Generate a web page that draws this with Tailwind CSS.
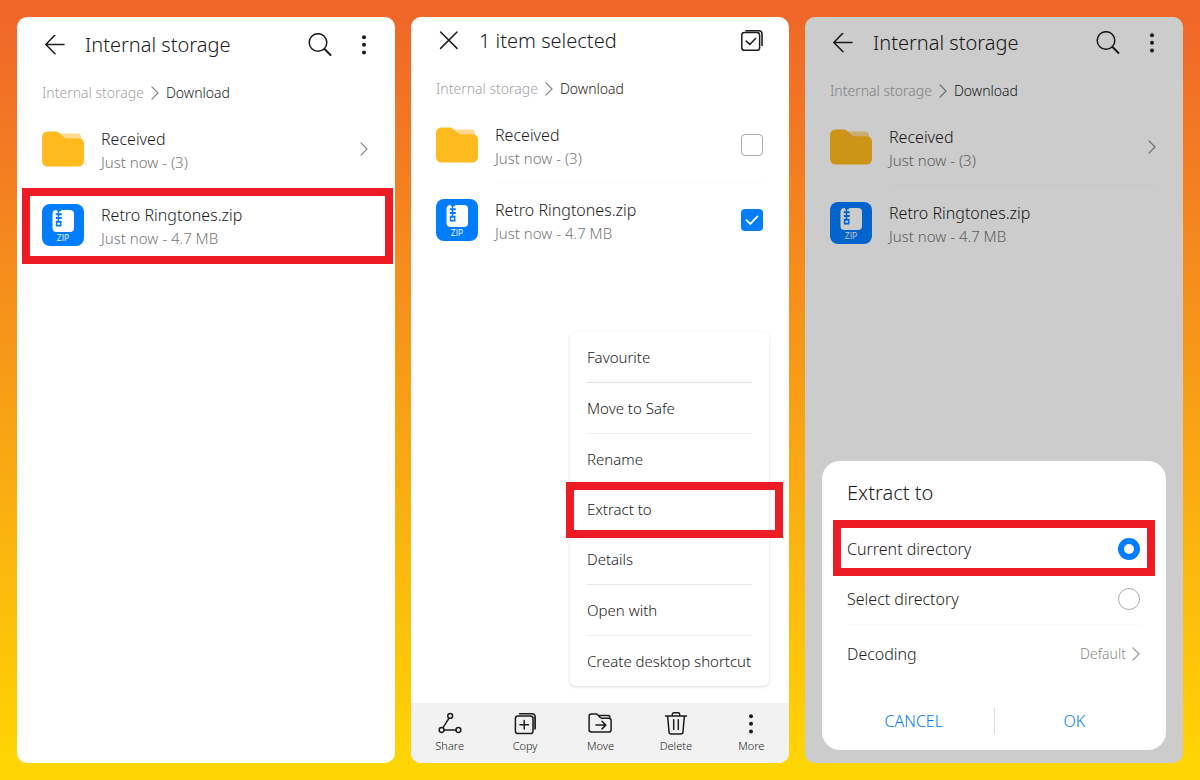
<!DOCTYPE html>
<html lang="en">
<head>
<meta charset="utf-8">
<meta name="viewport" content="width=device-width, initial-scale=1">
<title>Extract a zip file</title>
<script src="https://cdn.jsdelivr.net/npm/@tailwindcss/browser@4"></script>
</head>
<body class="grid min-h-screen grid-cols-3 gap-4 bg-linear-to-b/srgb from-[#f06729] from-2% to-[#ffd503] to-98% p-[17px] font-['Noto_Sans','Open_Sans',sans-serif] font-light text-[#1c1c1c]">

<!-- Shared icons -->
<svg class="hidden" aria-hidden="true">
  <symbol id="back" viewBox="0 0 20 20"><path d="M10 0 .8 9.400l9.200 9.400M.8 9.400h18.200" fill="none" stroke="currentColor" stroke-width="1.500" stroke-linecap="round" stroke-linejoin="round"/></symbol>
  <symbol id="close" viewBox="0 0 20 20"><path d="m1.600 1 16.400 16.400M18 1 1.600 17.400" fill="none" stroke="currentColor" stroke-width="1.500" stroke-linecap="round"/></symbol>
  <symbol id="search" viewBox="0 0 24 24"><g fill="none" stroke="currentColor"><circle cx="10" cy="9.500" r="8.800" stroke-width="1.500"/><path d="m16.500 16 6 6" stroke-width="1.900" stroke-linecap="round"/></g></symbol>
  <symbol id="dots" viewBox="0 0 6 20"><g fill="currentColor"><circle cx="3" cy="2.200" r="2"/><circle cx="3" cy="9.800" r="2"/><circle cx="3" cy="17.400" r="2"/></g></symbol>
  <symbol id="chevron" viewBox="0 0 8 14"><path d="m1 .8 6 6.200-6 6.200" fill="none" stroke="currentColor" stroke-width="1.200" stroke-linecap="round" stroke-linejoin="round"/></symbol>
  <symbol id="select-all" viewBox="0 0 22 22"><g fill="none" stroke="currentColor" stroke-width="1.500" stroke-linecap="round" stroke-linejoin="round"><rect x=".8" y="2.500" width="17.800" height="17.800" rx="2.600"/><path d="m5.300 11.100 3.500 3.400 5.900-6.200"/><path d="M5 .8h13a3 3 0 0 1 3 3V15.500" stroke-width="1.600"/></g></symbol>
  <symbol id="folder" viewBox="0 0 42 36"><path d="M14 2.500h21.500a3.500 3.500 0 0 1 3.500 3.500v8H18z" fill="#ffd98f"/><path d="M5.500.5h8.300a5 5 0 0 1 3.400 1.400l4.700 4.400a4 4 0 0 0 2.600 1H37a5 5 0 0 1 5 5V30a5.500 5.500 0 0 1-5.500 5.500h-31A5.500 5.500 0 0 1 0 30V6A5.500 5.500 0 0 1 5.500.5z" fill="#ffbb1e"/></symbol>
  <symbol id="zip" viewBox="0 0 42 42"><rect width="42" height="42" rx="8" fill="#007dff"/><rect x="10.500" y="6" width="21.500" height="22" rx="4" fill="#fff"/><path d="M15.500 5.500h3.700v1.800h-2v1.900h2.600v2h-2.600v1.800h2.600v2h-2.600v1.800h2.300v5.700h-5.700v-5.700h2v-1.800h-2v-2h2v-1.800h-2v-2h2V7.300h-1.300z" fill="#007dff"/><path d="M15.300 18.800h2.800v2h-2.800z" fill="#fff"/><text x="21" y="37.300" text-anchor="middle" font-family="Open Sans, sans-serif" font-size="8.500" font-weight="400" fill="#fff">ZIP</text></symbol>
  <symbol id="share" viewBox="0 0 24 24"><g fill="none" stroke="currentColor" stroke-width="1.500"><circle cx="12.200" cy="3.900" r="2.400"/><circle cx="3.600" cy="18" r="2.400"/><circle cx="20.400" cy="18" r="2.400"/><path d="M11 6.100 4.900 15.800M6 18h12"/></g></symbol>
  <symbol id="copy" viewBox="0 0 24 24"><g fill="none" stroke="currentColor" stroke-width="1.500" stroke-linecap="round" stroke-linejoin="round"><rect x="2.400" y="3.900" width="17.600" height="17.600" rx="2.600"/><path d="M11.200 8.500v8.400M7 12.700h8.400"/><path d="M6.500 1.700h12.700a3 3 0 0 1 3 3v12" /><path d="M21.300 4.500v13" stroke-opacity=".45"/></g></symbol>
  <symbol id="move" viewBox="0 0 24 24"><g fill="none" stroke="currentColor" stroke-width="1.500" stroke-linecap="round" stroke-linejoin="round"><path d="M3.400 2h4.800a2 2 0 0 1 1.500.7l2.600 2.900a2 2 0 0 0 1.500.6h7a2.300 2.300 0 0 1 2.300 2.300v9.200a2.400 2.400 0 0 1-2.400 2.400H3.500a2.400 2.400 0 0 1-2.400-2.400V4.400A2.400 2.400 0 0 1 3.400 2z"/><path d="M11 3.500h9.100a1.800 1.800 0 0 1 1.800 1.800"/><path d="M8 13.100h9.500M14 9.300l3.800 3.800-3.800 3.800"/></g></symbol>
  <symbol id="trash" viewBox="0 0 24 24"><g fill="none" stroke="currentColor" stroke-width="1.500" stroke-linecap="round" stroke-linejoin="round"><path d="M1.500 4h21M8.300 3.700V2.500A1.700 1.700 0 0 1 10 .8h4a1.700 1.700 0 0 1 1.700 1.700v1.200M3.700 4.300 5 20a2.200 2.200 0 0 0 2.200 2h9.600a2.200 2.200 0 0 0 2.200-2l1.300-15.700M9.700 7.700v9.800M14.300 7.700v9.800"/></g></symbol>
  <symbol id="tick" viewBox="0 0 22 22"><path d="m5.500 11.200 3.800 3.700 7.200-7.500" fill="none" stroke="currentColor" stroke-width="1.900" stroke-linecap="round" stroke-linejoin="round"/></symbol>
</svg>

<!-- Step 1: file list -->
<section class="overflow-hidden rounded-[10px] bg-white">
  <header class="flex h-14 items-center px-7">
    <button aria-label="Back"><svg class="size-5"><use href="#back"/></svg></button>
    <h2 class="ml-5 flex-1 text-xl">Internal storage</h2>
    <button aria-label="Search"><svg class="size-6"><use href="#search"/></svg></button>
    <button class="ml-[29px]" aria-label="Menu"><svg class="h-5 w-1.5"><use href="#dots"/></svg></button>
  </header>
  <nav class="mt-0.5 flex h-9 items-center px-[25px] text-sm" aria-label="Path">
    <a href="#" class="text-[#a3a3a3]">Internal storage</a>
    <svg class="mx-[7px] h-3.5 w-2 text-[#888]"><use href="#chevron"/></svg>
    <a href="#">Download</a>
  </nav>
  <ul>
    <li class="flex h-[76px] items-center gap-[17px] px-[25px]">
      <svg class="h-9 w-[42px]"><use href="#folder"/></svg>
      <div class="flex-1 pt-0.5"><p class="text-base leading-6">Received</p><p class="text-[15px] leading-[22px] text-[#777]">Just now - (3)</p></div>
      <svg class="mr-0.5 h-3.5 w-2 text-[#888]"><use href="#chevron"/></svg>
    </li>
    <li class="relative flex h-[76px] items-center gap-[17px] px-[25px]">
      <svg class="size-[42px]"><use href="#zip"/></svg>
      <div class="flex-1 pt-0.5"><p class="text-base leading-6">Retro Ringtones.zip</p><p class="text-[15px] leading-[22px] text-[#777]">Just now - 4.7 MB</p></div>
      <span class="absolute top-px right-0.5 left-[5px] h-[76px] border-8 border-[#ed1c24]"></span>
    </li>
  </ul>
</section>

<!-- Step 2: selection and context menu -->
<section class="relative flex flex-col overflow-hidden rounded-[10px] bg-white">
  <header class="flex h-12 items-center pr-[26px] pl-7">
    <button aria-label="Cancel selection"><svg class="size-5"><use href="#close"/></svg></button>
    <h2 class="ml-5 flex-1 text-xl">1 item selected</h2>
    <button aria-label="Select all"><svg class="size-[22px]"><use href="#select-all"/></svg></button>
  </header>
  <nav class="mt-1.5 flex h-9 items-center px-[25px] text-sm" aria-label="Path">
    <a href="#" class="text-[#a3a3a3]">Internal storage</a>
    <svg class="mx-[7px] h-3.5 w-2 text-[#888]"><use href="#chevron"/></svg>
    <a href="#">Download</a>
  </nav>
  <ul class="flex-1">
    <li>
      <label class="flex h-[75px] items-center gap-[17px] pr-[26px] pl-[25px]">
        <svg class="h-9 w-[42px]"><use href="#folder"/></svg>
        <span class="flex-1 pt-0.5"><span class="block text-base leading-6">Received</span><span class="block text-[15px] leading-[22px] text-[#777]">Just now - (3)</span></span>
        <input type="checkbox" class="size-[22px] appearance-none rounded border border-[#aaa]">
      </label>
    </li>
    <li class="relative">
      <span class="absolute top-0 right-[26px] left-[84px] h-px bg-[#fafafa]"></span>
      <label class="flex h-[76px] items-center gap-[17px] pr-[26px] pl-[25px]">
        <svg class="size-[42px]"><use href="#zip"/></svg>
        <span class="flex-1 pt-0.5"><span class="block text-base leading-6">Retro Ringtones.zip</span><span class="block text-[15px] leading-[22px] text-[#777]">Just now - 4.7 MB</span></span>
        <span class="grid">
          <input type="checkbox" checked class="col-start-1 row-start-1 size-[22px] appearance-none rounded bg-[#007dff]">
          <svg class="pointer-events-none col-start-1 row-start-1 size-[22px] text-white"><use href="#tick"/></svg>
        </span>
      </label>
    </li>
  </ul>
  <nav class="grid h-[60px] grid-cols-5 bg-[#f2f2f2] pl-px text-[11px]" aria-label="Actions">
    <button class="flex flex-col items-center pt-[9px] leading-5"><svg class="size-6"><use href="#share"/></svg>Share</button>
    <button class="flex flex-col items-center pt-[9px] leading-5"><svg class="size-6"><use href="#copy"/></svg>Copy</button>
    <button class="flex flex-col items-center pt-[9px] leading-5"><svg class="size-6"><use href="#move"/></svg>Move</button>
    <button class="flex flex-col items-center pt-[9px] leading-5"><svg class="size-6"><use href="#trash"/></svg>Delete</button>
    <button class="flex flex-col items-center pt-[9px] leading-5"><svg class="my-0.5 h-5 w-1.5"><use href="#dots"/></svg>More</button>
  </nav>
  <menu class="absolute right-5 bottom-[77px] flex h-[354px] w-[199px] flex-col rounded-md bg-white px-[17px] text-[15px] shadow-[0_1px_3px_rgba(0,0,0,0.15)]">
    <li class="flex flex-1 border-b border-[#e0e0e0]"><button class="flex-1 text-left">Favourite</button></li>
    <li class="flex flex-1 border-b border-[#f0f0f0]"><button class="flex-1 text-left">Move to Safe</button></li>
    <li class="flex flex-1"><button class="flex-1 text-left">Rename</button></li>
    <li class="relative flex flex-1"><button class="flex-1 text-left">Extract to</button><span class="absolute -top-0.5 -right-[31px] -bottom-1 -left-[21px] border-8 border-[#ed1c24]"></span></li>
    <li class="flex flex-1 border-b border-[#e8e8e8]"><button class="flex-1 text-left">Details</button></li>
    <li class="flex flex-1 border-b border-[#f0f0f0]"><button class="flex-1 text-left">Open with</button></li>
    <li class="flex flex-1"><button class="flex-1 text-left whitespace-nowrap">Create desktop shortcut</button></li>
  </menu>
</section>

<!-- Step 3: extraction dialog -->
<section class="relative overflow-hidden rounded-[10px] bg-white">
  <header class="flex h-[52px] items-center px-7">
    <button aria-label="Back"><svg class="size-5"><use href="#back"/></svg></button>
    <h2 class="ml-5 flex-1 text-xl">Internal storage</h2>
    <button aria-label="Search"><svg class="size-6"><use href="#search"/></svg></button>
    <button class="ml-[29px]" aria-label="Menu"><svg class="h-5 w-1.5"><use href="#dots"/></svg></button>
  </header>
  <nav class="mt-1 flex h-9 items-center px-[25px] text-sm" aria-label="Path">
    <a href="#" class="text-[#a3a3a3]">Internal storage</a>
    <svg class="mx-[7px] h-3.5 w-2 text-[#888]"><use href="#chevron"/></svg>
    <a href="#">Download</a>
  </nav>
  <ul>
    <li class="flex h-[76px] items-center gap-[17px] px-[25px]">
      <svg class="h-9 w-[42px]"><use href="#folder"/></svg>
      <div class="flex-1 pt-0.5"><p class="text-base leading-6">Received</p><p class="text-[15px] leading-[22px] text-[#777]">Just now - (3)</p></div>
      <svg class="mr-0.5 h-3.5 w-2 text-[#888]"><use href="#chevron"/></svg>
    </li>
    <li class="relative flex h-[76px] items-center gap-[17px] px-[25px]">
      <span class="absolute top-0 right-[26px] left-[84px] h-px bg-[#fafafa]"></span>
      <svg class="size-[42px]"><use href="#zip"/></svg>
      <div class="flex-1 pt-0.5"><p class="text-base leading-6">Retro Ringtones.zip</p><p class="text-[15px] leading-[22px] text-[#777]">Just now - 4.7 MB</p></div>
    </li>
  </ul>
  <div class="absolute inset-0 flex flex-col justify-end bg-black/20 px-[17px] pb-[13px]">
    <form role="dialog" aria-label="Extract to" class="rounded-[18px] bg-white pr-[26px] pl-[25px] text-base">
      <h3 class="flex h-[62px] items-center pt-px text-xl">Extract to</h3>
      <label class="relative flex h-[51px] items-center justify-between">Current directory
        <input type="radio" name="dir" checked class="size-[22px] appearance-none rounded-full border-[6px] border-[#007dff]">
        <span class="absolute -top-[3px] -right-[15px] -bottom-0.5 -left-3.5 border-8 border-[#ed1c24]"></span>
      </label>
      <label class="flex h-[51px] items-center justify-between border-b border-[#f8f8f8]">Select directory
        <input type="radio" name="dir" class="size-[22px] appearance-none rounded-full border border-[#aaa]">
      </label>
      <button type="button" class="flex h-[58px] w-full items-center text-left"><span class="flex-1">Decoding</span><span class="text-sm text-[#888]">Default</span><svg class="ml-1.5 h-3.5 w-2 text-[#999]"><use href="#chevron"/></svg></button>
      <div class="mt-[9px] flex h-[58px] items-center pl-px text-[#007dff]">
        <button type="button" class="flex-1 pr-3.5">CANCEL</button>
        <span class="h-[26px] w-px bg-[#ddd]"></span>
        <button type="button" class="flex-1 pl-3.5">OK</button>
      </div>
    </form>
  </div>
</section>
</body>
</html>
